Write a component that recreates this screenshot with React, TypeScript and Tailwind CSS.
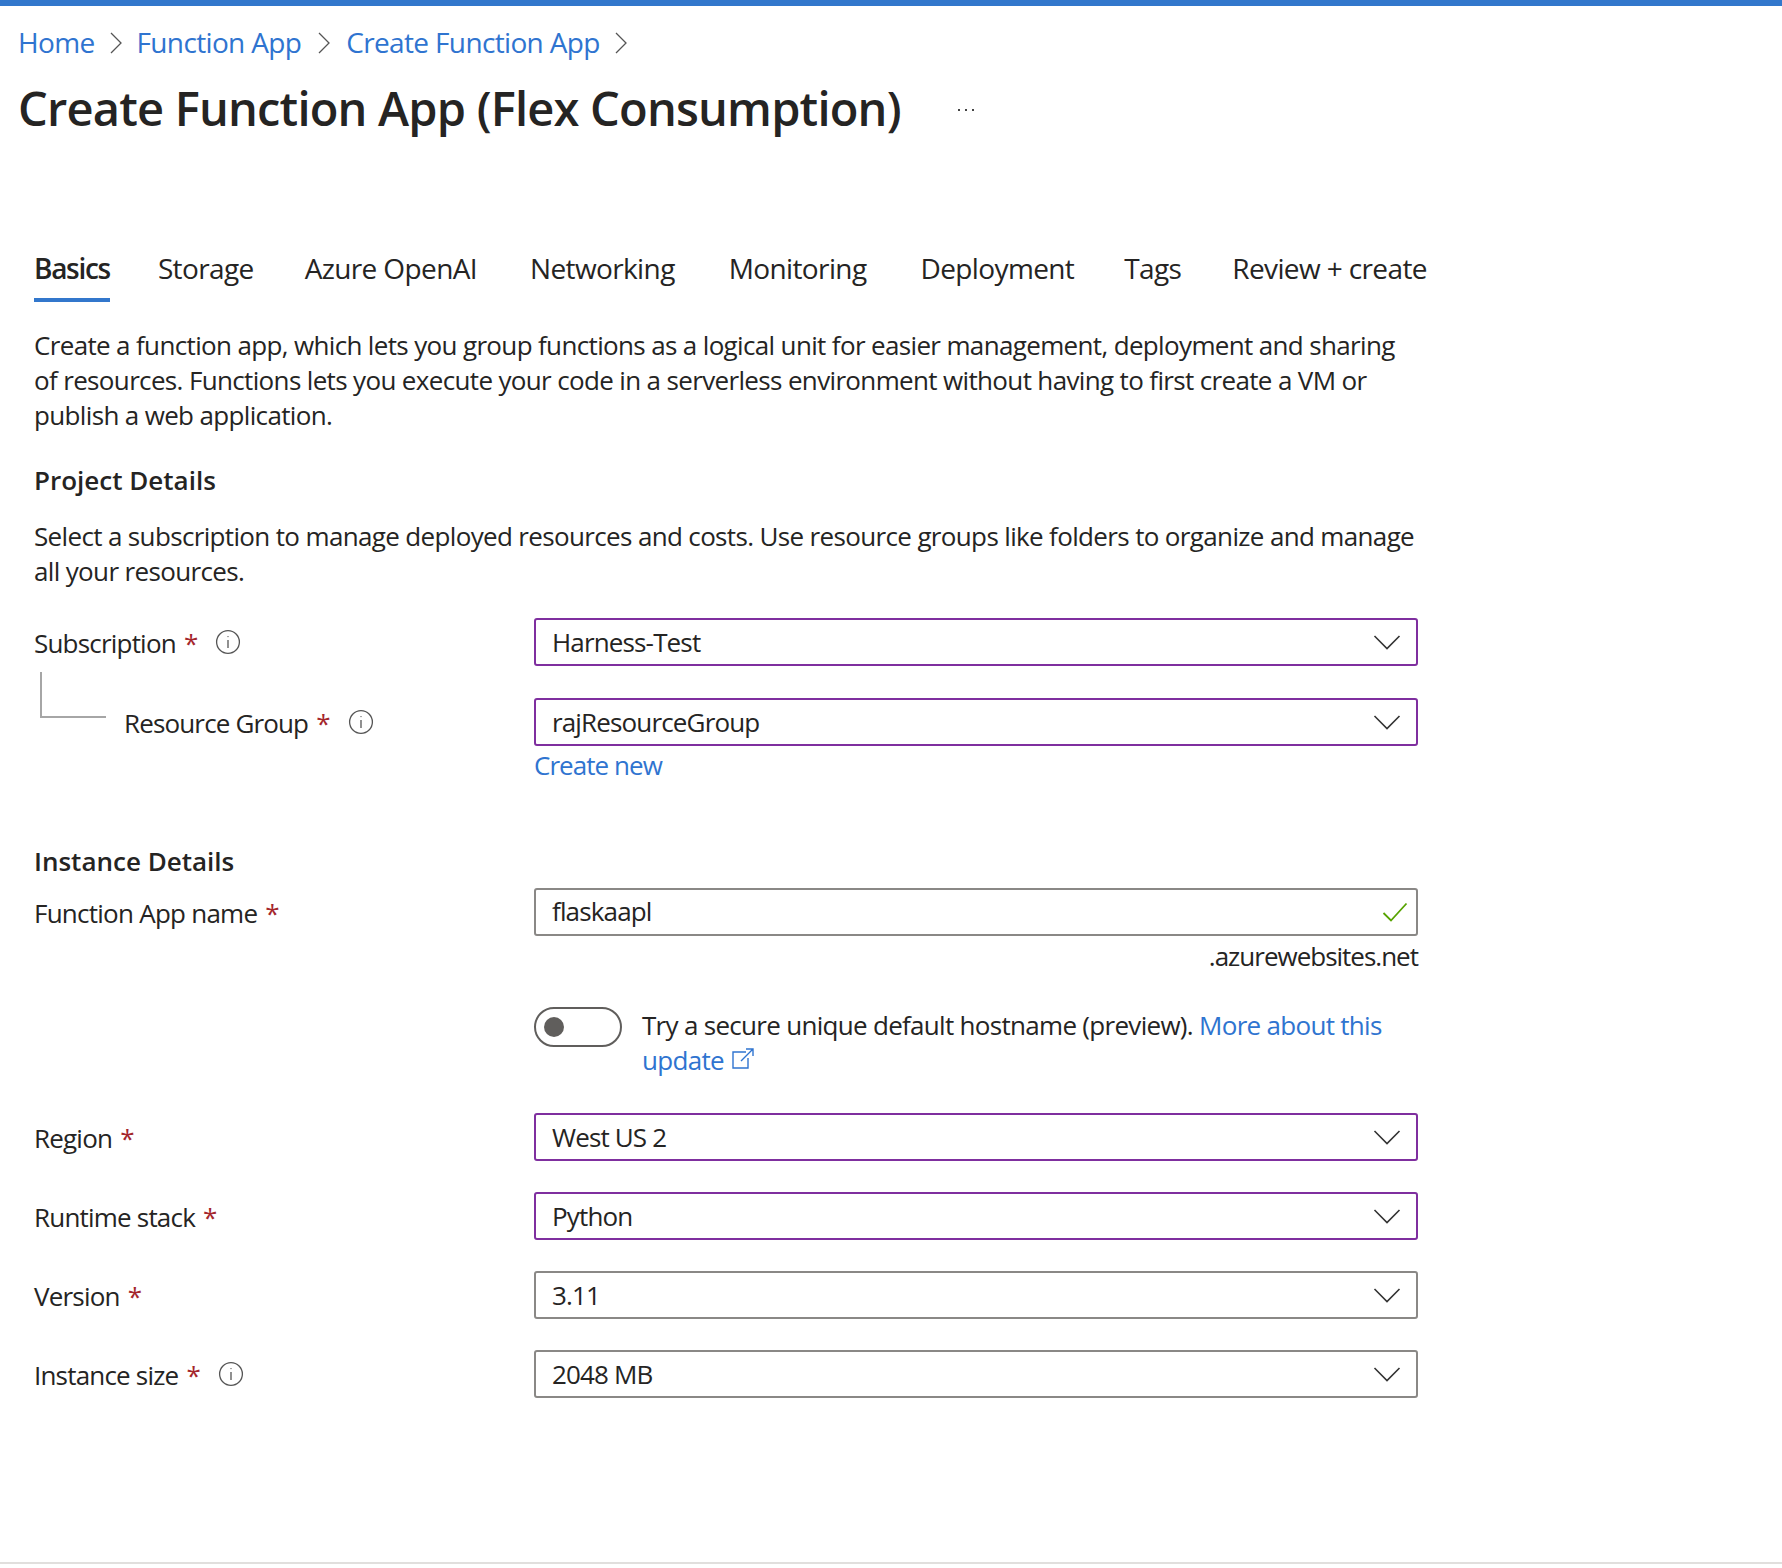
import React from "react";

const Chevron = () => (
  <svg width="28" height="16" viewBox="0 0 28 16" fill="none" stroke="#333" strokeWidth="1.6" className="shrink-0">
    <path d="M1.5 2 L14 14.5 L26.5 2" />
  </svg>
);

const Info = () => (
  <svg width="26" height="26" viewBox="0 0 26 26" fill="none" stroke="#555" strokeWidth="1.3" className="shrink-0">
    <circle cx="13" cy="13" r="11.4" />
    <path d="M13 11 V19" />
    <circle cx="13" cy="7.6" r="0.7" fill="#555" stroke="none" />
  </svg>
);

const Crumb = ({ m }: { m: string }) => (
  <svg width="14" height="24" viewBox="0 0 14 24" fill="none" stroke="#555" strokeWidth="1.3" className={m}>
    <path d="M2 2 L12 12 L2 22" />
  </svg>
);

const Req = () => <span className="text-[#a4262c] ml-2">*</span>;

function Sel({ v, active }: { v: string; active?: boolean }) {
  return (
    <div
      className={
        "h-12 w-[884px] border-2 rounded-[3px] flex items-center justify-between pl-[16px] pr-[15px] tracking-[-0.85px] " +
        (active ? "border-[#7f2f9f]" : "border-[#8a8886]")
      }
    >
      <span>{v}</span>
      <Chevron />
    </div>
  );
}

function Row({ label, info, v, active, mb }: { label: string; info?: boolean; v: string; active?: boolean; mb: string }) {
  return (
    <div className={"flex " + mb}>
      <div className="w-[500px] h-12 flex items-center pt-[2px] tracking-[-0.8px]">
        <span>{label}</span>
        <Req />
        {info && <span className="ml-[18px] -mt-[2px]"><Info /></span>}
      </div>
      <Sel v={v} active={active} />
    </div>
  );
}

const tabs: [string, string][] = [
  ["Storage", "ml-[48px]"],
  ["Azure OpenAI", "ml-[51px]"],
  ["Networking", "ml-[53px]"],
  ["Monitoring", "ml-[54px]"],
  ["Deployment", "ml-[54px]"],
  ["Tags", "ml-[50px]"],
  ["Review + create", "ml-[51px]"],
];

export default function App() {
  return (
    <div className="w-[1782px] h-[1568px] bg-white text-[#252423] text-[26px] leading-[35px] font-['Open_Sans','Noto_Sans',sans-serif] tracking-[-0.65px] flex flex-col overflow-hidden">
      <div className="h-[6px] bg-[#3277cc] shrink-0" />
      <div className="flex items-center h-[35px] mt-[19px] pl-[18px] text-[#2f74d0] text-[28px] tracking-[-0.65px]">
        <span>Home</span>
        <Crumb m="mx-[14px]" />
        <span>Function App</span>
        <Crumb m="ml-[16px] mr-[15px]" />
        <span>Create Function App</span>
        <Crumb m="mx-[14px]" />
      </div>
      <div className="flex items-center h-[60px] mt-[18px] pl-[18px]">
        <span className="text-[47px] leading-[60px] font-semibold tracking-[-0.8px]">Create Function App (Flex Consumption)</span>
        <span className="ml-[57px] mt-[4px] flex gap-[5px]">
          <i className="w-[2px] h-[2px] bg-[#444]" />
          <i className="w-[2px] h-[2px] bg-[#444]" />
          <i className="w-[2px] h-[2px] bg-[#444]" />
        </span>
      </div>

      <div className="pl-[34px] flex flex-col">
        <div className="flex mt-[112px] h-[52px] text-[28px] tracking-[-0.62px]">
          <div className="border-b-4 border-[#3277cc] h-[52px] font-semibold pt-[1px] tracking-[-1.3px]">Basics</div>
          {tabs.map(([t, m]) => (
            <div key={t} className={m + " pt-[1px]"}>{t}</div>
          ))}
        </div>

        <p className="mt-[26px] w-[1380px]">
          Create a function app, which lets you group functions as a logical unit for easier management, deployment and sharing of resources. Functions lets you execute your code in a serverless environment without having to first create a VM or publish a web application.
        </p>

        <h2 className="mt-[30px] font-semibold tracking-normal">Project Details</h2>
        <p className="mt-[21px] w-[1400px]">
          Select a subscription to manage deployed resources and costs. Use resource groups like folders to organize and manage all your resources.
        </p>

        <div className="mt-[29px]">
          <Row label="Subscription" info v="Harness-Test" active mb="mb-8" />
          <div className="flex relative">
            <div className="absolute left-[6px] top-[-26px] w-[66px] h-[46px] border-l-2 border-b-2 border-[#a6a6a6]" />
            <div className="w-[500px] h-12 flex items-center pl-[90px] pt-[2px] tracking-[-0.85px]">
              <span>Resource Group</span>
              <Req />
              <span className="ml-[18px] -mt-[2px]"><Info /></span>
            </div>
            <Sel v="rajResourceGroup" active />
          </div>
          <div className="pl-[500px] mt-[2px] text-[#2f74d0] tracking-[-0.95px]">Create new</div>
        </div>

        <h2 className="mt-[61px] font-semibold tracking-normal">Instance Details</h2>
        <div className="flex mt-[9px]">
          <div className="w-[500px] h-12 flex items-center pt-[2px] tracking-[-0.75px]">
            <span>Function App name</span>
            <Req />
          </div>
          <div className="h-12 w-[884px] border-2 border-[#8a8886] rounded-[3px] flex items-center justify-between pl-[16px] pr-[8px] tracking-[-0.85px]">
            <span className="-mt-[2px]">flaskaapl</span>
            <svg width="26" height="20" viewBox="0 0 26 20" fill="none" stroke="#57a300" strokeWidth="1.8"><path d="M1.5 11 L9 18.5 L24.5 1.5" /></svg>
          </div>
        </div>
        <div className="w-[1384px] text-right mt-[3px] tracking-[-1px]">.azurewebsites.net</div>

        <div className="flex pl-[500px] mt-[33px]">
          <div className="w-[88px] h-[40px] border-2 border-[#605e5c] rounded-full flex items-center pl-[8px] shrink-0">
            <div className="w-[20px] h-[20px] rounded-full bg-[#605e5c]" />
          </div>
          <p className="ml-[20px] w-[775px] mt-[1px] tracking-[-0.7px]">
            <span>Try a secure unique default hostname (preview). </span>
            <span className="text-[#2f74d0]">More about this</span>
            <br />
            <span className="text-[#2f74d0]">update</span>
            <svg width="24" height="24" viewBox="0 0 24 24" fill="none" stroke="#2f74d0" strokeWidth="1.4" className="inline ml-[7px] align-[-1px]">
              <path d="M15 5 H2 V21 H17 V11" />
              <path d="M10 14 L22 2 M15 2 H22 V9" />
            </svg>
          </p>
        </div>

        <div className="mt-[35px]">
          <Row label="Region" v="West US 2" active mb="mb-[31px]" />
          <Row label="Runtime stack" v="Python" active mb="mb-[31px]" />
          <Row label="Version" v="3.11" mb="mb-[31px]" />
          <Row label="Instance size" info v="2048 MB" mb="mb-0" />
        </div>
      </div>
      <div className="mt-auto mb-[4px] h-[2px] bg-[#e1dfdd]" />
    </div>
  );
}
